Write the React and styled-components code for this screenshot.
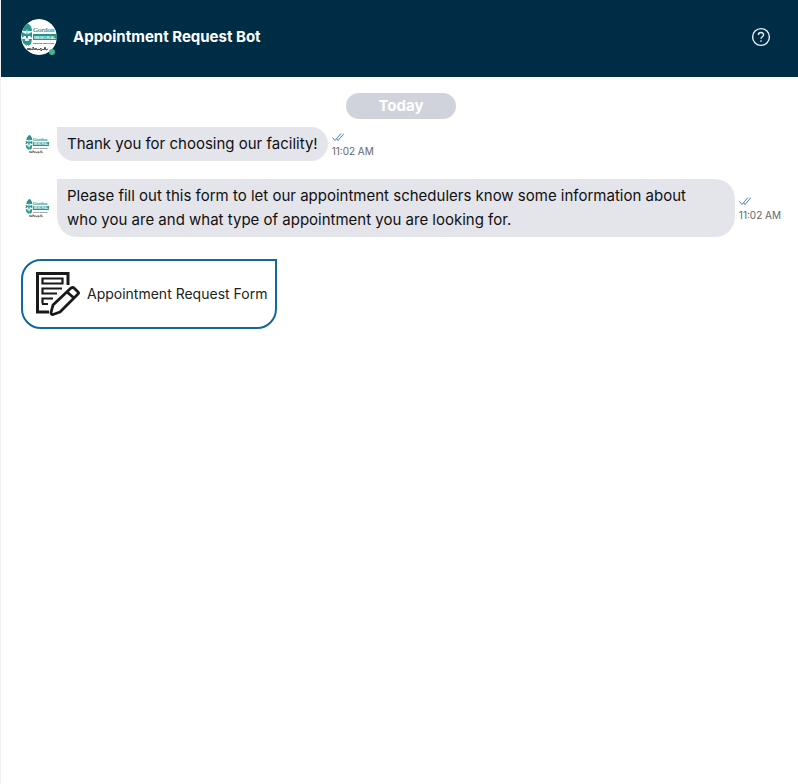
import styled, { createGlobalStyle } from 'styled-components';

const messages = [
  { id: 1, text: 'Thank you for choosing our facility!', time: '11:02 AM' },
  {
    id: 2,
    text: 'Please fill out this form to let our appointment schedulers know some information about who\u00a0you\u00a0are and what type of appointment you are looking for.',
    time: '11:02 AM',
  },
];

function Logo({ size }) {
  return (
    <LogoSvg viewBox='0 0 36 36' width={size} height={size} role='img' aria-label='Gordon Memorial'>
      <circle cx='18' cy='18' r='18' fill='#fff' />
      <path d='M6 4c4 2 5 5 5 8H2c0-3 1-6 4-8zM1 13l4 2-4 4zM11 13v6l-4-4zM1 20h4l1 7-4-3zM11 20l-1 5-3 2V20z' fill='#2a9490' />
      <path d='M6 6v20M2 16h8' stroke='#2a9490' strokeWidth='2' fill='none' />
      <path d='M6 10l1 3-1 3-1-3zM4 19h4v3H4z' fill='#d5eeec' />
      <text x='12' y='13' fontFamily='Liberation Serif, serif' fontSize='7' stroke='#2a9490' strokeWidth='.2' fill='#2a9490'>Gordon</text>
      <rect x='12' y='15' width='24' height='6' fill='#1c9690' />
      <text x='13' y='20' fontFamily='Liberation Sans, sans-serif' fontWeight='700' fontSize='4' fill='#fff'>MEMORIAL</text>
      <text x='12' y='25' fontFamily='Liberation Serif, serif' fontSize='2.4' stroke='#5f7f7d' strokeWidth='.2' fill='#5f7f7d'>HEALTH SERVICES</text>
      <path d='M6 31l1-2 1 2 1-2v2l2-1 1 1v-3l2 3 1-2 1 2 2-1v1l2-2v3l2-2 1 1 1-3 1 3 2-1' stroke='#444' fill='none' />
    </LogoSvg>
  );
}

function Ticks() {
  return (
    <svg width='12' height='10' viewBox='0 0 12 10' fill='none' stroke='#4c82ad' aria-hidden='true'>
      <path d='M.5 5.5L3 8.5 9 1.5M4.5 6.5L6 8.5 12 1.5' />
    </svg>
  );
}

function FormIcon() {
  return (
    <svg width='45' height='45' viewBox='0 0 45 45' fill='none' stroke='#191919' strokeWidth='3' aria-hidden='true'>
      <path d='M33 14V2.5H2.5v38.5H14' />
      <path d='M7.5 7.5h20v5h-20zM27 17.5H7.5v5H22M18 27.5H7.5v5M7 33h6' strokeWidth='2.2' />
      <path d='M18 34L36 17q2-1 3 0l4 4q1 1 0 2L25 41l-7 2.5q-2 0-2-2zM32 21l7 6' strokeWidth='2.8' strokeLinejoin='round' />
    </svg>
  );
}

function App() {
  return (
    <>
      <GlobalStyle />
      <Page>
        <Header>
          <AvatarWrap>
            <Logo size={36} />
            <OnlineDot />
          </AvatarWrap>
          <Title>Appointment Request Bot</Title>
          <HelpButton type='button' aria-label='Help'>
            <svg width='20' height='20' viewBox='0 0 20 20' fill='none' stroke='#e4f1f8' strokeWidth='1.4'>
              <circle cx='10' cy='10' r='8.4' />
              <path d='M7.4 8.1c0-3.4 5.2-3.3 5.2-.3 0 2-2.6 2-2.6 4' />
              <circle cx='10' cy='14' r='.5' fill='#e4f1f8' strokeWidth='.6' />
            </svg>
          </HelpButton>
        </Header>

        <Chat>
          <DayLabel>Today</DayLabel>
          <MessageList>
            {messages.map((message) => (
              <Message key={message.id}>
                <Logo size={24} />
                <Bubble>{message.text}</Bubble>
                <Meta>
                  <Ticks />
                  <time>{message.time}</time>
                </Meta>
              </Message>
            ))}
          </MessageList>
          <FormButton type='button'>
            <FormIcon />
            Appointment Request Form
          </FormButton>
        </Chat>
      </Page>
    </>
  );
}

export default App;

const GlobalStyle = createGlobalStyle`
  * {
    box-sizing: border-box;
  }

  body {
    margin: 0;
    background: #fff;
    font-family: Inter, 'Liberation Sans', sans-serif;
    color: #111;
  }
`;

const Page = styled.div`
  min-height: 100vh;
  border-left: 1px solid #f0f0f2;
`;

const Header = styled.header`
  display: flex;
  align-items: center;
  gap: 16px;
  padding: 19px 27px 22px 20px;
  background: #002d46;
`;

const AvatarWrap = styled.div`
  position: relative;
  display: flex;
`;

const LogoSvg = styled.svg`
  flex: none;
  border-radius: 50%;
`;

const OnlineDot = styled.span`
  position: absolute;
  right: 2px;
  bottom: 0;
  width: 6px;
  height: 6px;
  border-radius: 50%;
  background: #45b38c;
`;

const Title = styled.h1`
  flex: 1;
  margin: 0;
  font-size: 15px;
  line-height: 24px;
  font-weight: 700;
  color: #fff;
`;

const HelpButton = styled.button`
  display: flex;
  padding: 0;
  border: 0;
  background: none;
  cursor: pointer;
`;

const Chat = styled.main`
  padding: 16px 17px 20px 20px;
`;

const DayLabel = styled.div`
  width: 110px;
  margin: 0 auto 8px;
  border-radius: 13px;
  background: #d0d3dc;
  text-align: center;
  font-size: 15px;
  line-height: 26px;
  font-weight: 700;
  color: #fff;
`;

const MessageList = styled.ul`
  display: flex;
  flex-direction: column;
  gap: 18px;
  margin: 0 0 22px;
  padding: 0 0 0 4px;
  list-style: none;
`;

const Message = styled.li`
  display: flex;
  align-items: center;
`;

const Bubble = styled.p`
  margin: 0 4px 0 8px;
  padding: 5px 10px;
  border-radius: 0 20px 20px 20px;
  background: #e4e4eb;
  font-size: 15px;
  line-height: 24px;
`;

const Meta = styled.div`
  display: flex;
  flex: none;
  flex-direction: column;
  gap: 2px;
  padding-top: 2px;
  font-size: 10px;
  line-height: 14px;
  white-space: nowrap;
  color: #66666b;
`;

const FormButton = styled.button`
  display: flex;
  align-items: center;
  gap: 7px;
  height: 70px;
  padding: 0 8px 2px 12px;
  border: 2px solid #14679a;
  border-radius: 20px 0 20px 20px;
  background: #fff;
  font-family: inherit;
  font-size: 14px;
  color: #222;
  cursor: pointer;
`;
